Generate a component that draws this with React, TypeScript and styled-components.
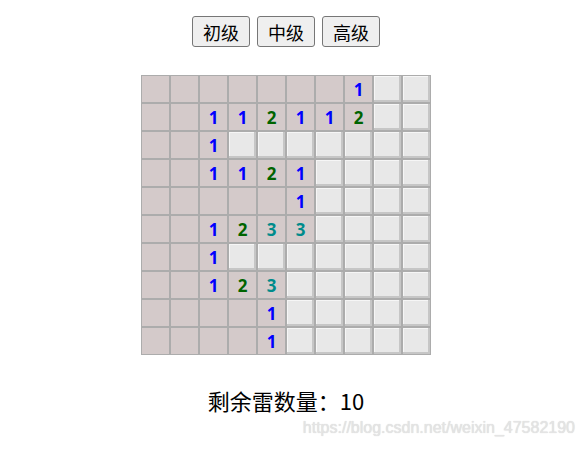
import React from "react";
import styled, { createGlobalStyle } from "styled-components";

const Global = createGlobalStyle`
  html, body { margin: 0; padding: 0; background: #ffffff; }
  body { font-family: "Noto Sans CJK SC", "Noto Sans", sans-serif; }
`;

const Page = styled.div`
  position: relative;
  width: 572px;
  height: 450px;
  display: flex;
  flex-direction: column;
  align-items: center;
  padding-top: 16px;
  box-sizing: border-box;
`;

const Toolbar = styled.div`
  display: flex;
  gap: 7px;
`;

const LevelButton = styled.button`
  width: 58px;
  height: 31px;
  padding: 0;
  font-family: "Noto Sans CJK SC", sans-serif;
  font-size: 18px;
  line-height: 1;
  color: #000;
  background: #efefef;
  border: 1px solid #767676;
  border-radius: 3px;
`;

const Board = styled.div`
  margin-top: 28px;
  display: grid;
  grid-template-columns: repeat(10, 29px);
  grid-auto-rows: 28px;
`;

const colors: Record<number, string> = { 1: "#0000ff", 2: "#006400", 3: "#008b8b" };

const Cell = styled.div<{ $open: boolean; $n: number }>`
  box-sizing: border-box;
  border: 1px solid #acacac;
  display: flex;
  align-items: center;
  justify-content: center;
  font-family: "Noto Sans", "Liberation Sans", sans-serif;
  font-weight: 700;
  font-size: 17px;
  line-height: 1;
  color: ${(p) => colors[p.$n] || "#000"};
  background: ${(p) => (p.$open ? "#d4caca" : "#e8e8e8")};
  box-shadow: ${(p) =>
    p.$open ? "none" : "inset -2px -2px 0 #c6c6c6, inset 1px 1px 0 #f6f6f6"};
`;

const Remaining = styled.div`
  margin-top: 30px;
  font-family: "Noto Sans CJK SC", sans-serif;
  font-size: 22px;
  line-height: 30px;
  color: #000;
`;

const Watermark = styled.div`
  position: absolute;
  right: -3px;
  top: 419px;
  font-family: "Liberation Sans", Arial, sans-serif;
  font-size: 16px;
  color: #e4e4e4;
  text-shadow: 0 0 1px #d0d0d0;
`;

// R = revealed blank, U = unrevealed, digits = revealed number
const rows = [
  "RRRRRRR1UU",
  "RR112112UU",
  "RR1UUUUUUU",
  "RR1121UUUU",
  "RRRRR1UUUU",
  "RR1233UUUU",
  "RR1UUUUUUU",
  "RR123UUUUU",
  "RRRR1UUUUU",
  "RRRR1UUUUU",
];

export default function App() {
  return (
    <>
      <Global />
      <Page>
        <Toolbar>
          <LevelButton>初级</LevelButton>
          <LevelButton>中级</LevelButton>
          <LevelButton>高级</LevelButton>
        </Toolbar>
        <Board>
          {rows.flatMap((r, i) =>
            r.split("").map((c, j) => {
              const open = c !== "U";
              const n = /\d/.test(c) ? Number(c) : 0;
              return (
                <Cell key={`${i}-${j}`} $open={open} $n={n}>
                  {n > 0 ? n : ""}
                </Cell>
              );
            })
          )}
        </Board>
        <Remaining>剩余雷数量：10</Remaining>
        <Watermark>https://blog.csdn.net/weixin_47582190</Watermark>
      </Page>
    </>
  );
}
